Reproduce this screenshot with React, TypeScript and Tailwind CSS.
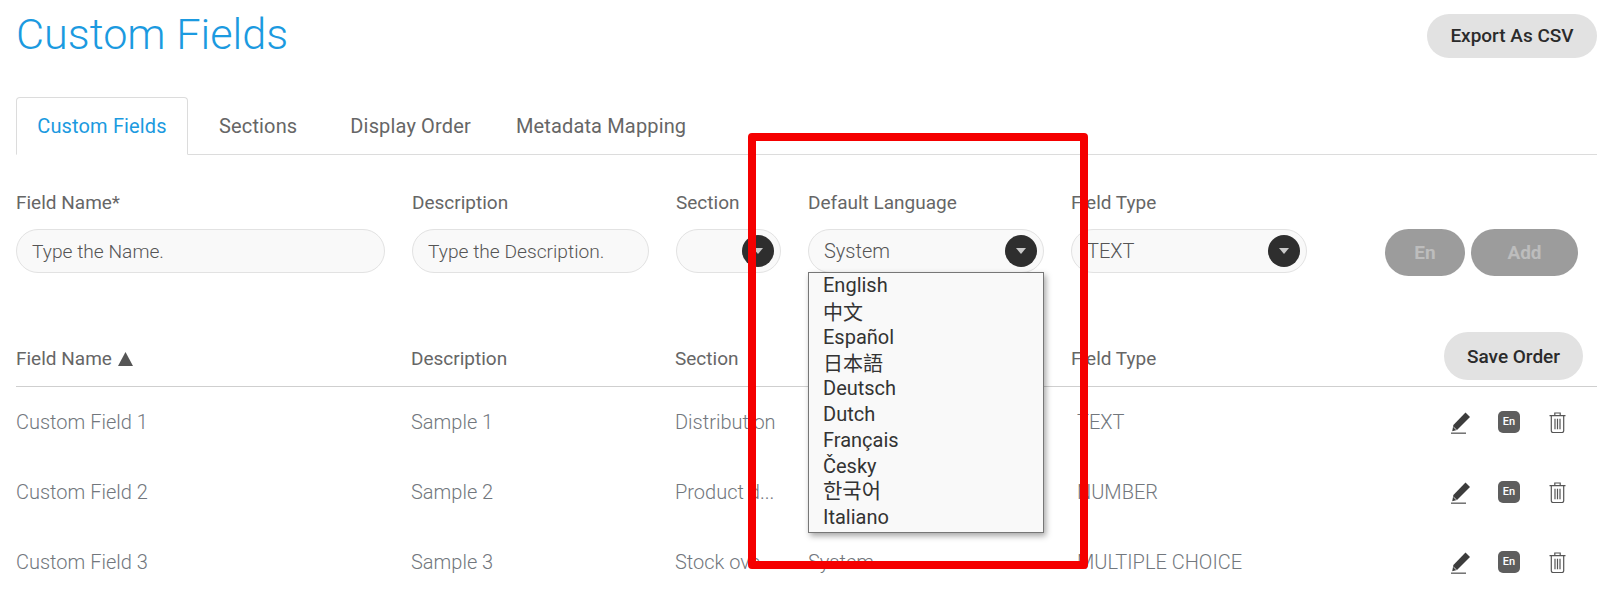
const languages = [
  { label: "English", className: "" },
  { label: "中文", className: "pt-[2px]" },
  { label: "Español", className: "" },
  { label: "日本語", className: "pt-[2px]" },
  { label: "Deutsch", className: "" },
  { label: "Dutch", className: "" },
  { label: "Français", className: "" },
  { label: "Česky", className: "" },
  { label: "한국어", className: "text-[21px]" },
  { label: "Italiano", className: "" },
];

const rows = [
  { name: "Custom Field 1", description: "Sample 1", section: "Distribution", type: "TEXT" },
  { name: "Custom Field 2", description: "Sample 2", section: "Product d...", type: "NUMBER" },
  { name: "Custom Field 3", description: "Sample 3", section: "Stock ove...", type: "MULTIPLE CHOICE" },
];

const Caret = () => (
  <span className="ml-auto mr-[6px] flex h-[32px] w-[32px] shrink-0 items-center justify-center rounded-full bg-[#2e2e2e]">
    <svg width="10" height="6" viewBox="0 0 10 6">
      <path d="M0 0h10L5 6z" fill="#c9c9c9" />
    </svg>
  </span>
);

const SelectBox = ({ value, width }: { value: string; width: string }) => (
  <div className={`flex h-[44px] items-center rounded-full border border-[#e2e2e2] bg-[#f9f9f9] pl-[15px] text-[20px] font-light text-[#555] ${width}`}>
    {value}
    <Caret />
  </div>
);

const PencilIcon = () => (
  <svg width="21" height="23" viewBox="0 0 21 23">
    <path d="M15.5 1.5L20 6 7 19 2.2 20.2 3.4 14z" fill="#3c3c3c" />
    <path d="M3.4 16l3.4 3.2" stroke="#fff" strokeWidth="0.8" fill="none" />
    <path d="M1 21.6h15v1.1H1z" fill="#3c3c3c" />
  </svg>
);

const TrashIcon = () => (
  <svg width="17" height="21" viewBox="0 0 17 21" fill="none" stroke="#555" strokeWidth="1.2">
    <path d="M0.5 3.6h16M5.8 3.4V1h5.4v2.4M2.3 3.6v15.2c0 1 .7 1.7 1.7 1.7h9c1 0 1.7-.7 1.7-1.7V3.6M6 6.8v10.4M8.5 6.8v10.4M11 6.8v10.4" />
  </svg>
);

const RowActions = () => (
  <div className="flex items-center">
    <PencilIcon />
    <span className="ml-[27px] flex h-[22px] w-[22px] items-center justify-center rounded-[5px] bg-[#5e5e5e] text-[11px] font-medium text-white">
      En
    </span>
    <span className="ml-[29px]">
      <TrashIcon />
    </span>
  </div>
);

export default function App() {
  return (
    <div className="relative h-[606px] overflow-hidden bg-white pr-[27px] pl-[16px] font-['Roboto',sans-serif]">
      <header className="flex h-[97px] items-start justify-between">
        <h1 className="mt-[8px] text-[43.2px] leading-[54px] font-light text-[#1b9ae0]">Custom Fields</h1>
        <button className="mt-[14px] h-[44px] w-[170px] rounded-full bg-[#e2e2e2] text-[19px] font-medium text-[#2b2b2b]">
          Export As CSV
        </button>
      </header>

      <nav className="flex h-[58px] items-stretch border-b border-[#dcdcdc] text-[20px] tracking-[0.15px] text-[#666]">
        <div className="-mb-px flex w-[172px] items-center justify-center rounded-t-[4px] border border-b-white border-[#dcdcdc] bg-white text-[#1b9ae0]">
          Custom Fields
        </div>
        <div className="ml-[31px] flex items-center pt-px">Sections</div>
        <div className="ml-[53px] flex items-center pt-px">Display Order</div>
        <div className="ml-[45px] flex items-center pt-px">Metadata Mapping</div>
      </nav>

      <section className="mt-[34px] flex items-start text-[#666]">
        <div className="w-[396px]">
          <label className="block h-[29px] text-[19px] leading-[28px]">Field Name*</label>
          <input
            placeholder="Type the Name."
            className="mt-[11px] h-[44px] w-[369px] rounded-full border border-[#e2e2e2] bg-[#f9f9f9] pl-[15px] text-[19.2px] font-light placeholder:text-[#555]"
          />
        </div>
        <div className="w-[264px]">
          <label className="block h-[29px] text-[19px] leading-[28px]">Description</label>
          <input
            placeholder="Type the Description."
            className="mt-[11px] h-[44px] w-[237px] rounded-full border border-[#e2e2e2] bg-[#f9f9f9] pl-[15px] text-[19.2px] font-light placeholder:text-[#555]"
          />
        </div>
        <div className="w-[132px]">
          <label className="block h-[29px] text-[19px] leading-[28px]">Section</label>
          <div className="mt-[11px]">
            <SelectBox value="" width="w-[105px]" />
          </div>
        </div>
        <div className="w-[263px]">
          <label className="block h-[29px] text-[19px] leading-[28px]">Default Language</label>
          <div className="mt-[11px]">
            <SelectBox value="System" width="w-[236px]" />
          </div>
        </div>
        <div className="w-[314px]">
          <label className="block h-[29px] text-[19px] leading-[28px]">Field Type</label>
          <div className="mt-[11px]">
            <SelectBox value="TEXT" width="w-[236px]" />
          </div>
        </div>
        <div className="mt-[40px] flex gap-[6px] text-[19px] font-bold text-[#bdbdbd]">
          <button className="h-[47px] w-[80px] rounded-full bg-[#9c9c9c] pt-px">En</button>
          <button className="h-[47px] w-[107px] rounded-full bg-[#9c9c9c] pt-px">Add</button>
        </div>
      </section>

      <div className="mt-[55px] grid h-[56px] grid-cols-[395px_264px_133px_263px_1fr] items-center border-b border-[#cfcfcf] text-[19px] text-[#666]">
        <div className="flex items-center gap-[6px] pt-px">
          Field Name
          <svg width="15" height="14" viewBox="0 0 15 14">
            <path d="M7.5 0L15 14H0z" fill="#555" />
          </svg>
        </div>
        <div className="pt-px">Description</div>
        <div className="pt-px">Section</div>
        <div className="pt-px">Default Language</div>
        <div className="flex items-center justify-between pt-px pr-[14px]">
          Field Type
          <button className="-mt-[7px] h-[48px] w-[139px] rounded-full bg-[#e2e2e2] pt-[3px] text-[19px] font-medium text-[#2b2b2b]">
            Save Order
          </button>
        </div>
      </div>

      {rows.map((row) => (
        <div key={row.name} className="grid h-[70px] grid-cols-[395px_264px_133px_263px_1fr] items-center text-[20px] font-light text-[#72777d]">
          <div>{row.name}</div>
          <div>{row.description}</div>
          <div className="w-[105px] truncate">{row.section}</div>
          <div>System</div>
          <div className="flex items-center justify-between pl-[6px] pr-[31px]">
            {row.type}
            <RowActions />
          </div>
        </div>
      ))}

      {/* open language list */}
      <ul className="absolute top-[272px] left-[808px] h-[261px] w-[236px] border border-[#777] bg-[#f9f9f9] pl-[14px] text-[20px] leading-[25px] text-[#333] shadow-[2px_3px_6px_rgba(0,0,0,0.35)] font-['Roboto','Noto_Sans_CJK_SC','Noto_Sans_CJK_KR',sans-serif]">
        {languages.map((lang) => (
          <li key={lang.label} className={`h-[25.8px] ${lang.className}`}>{lang.label}</li>
        ))}
      </ul>

      {/* red annotation frame */}
      <div className="absolute top-[133px] left-[748px] h-[436px] w-[340px] rounded-[4px] border-[8px] border-[#f50000]" />
    </div>
  );
}
